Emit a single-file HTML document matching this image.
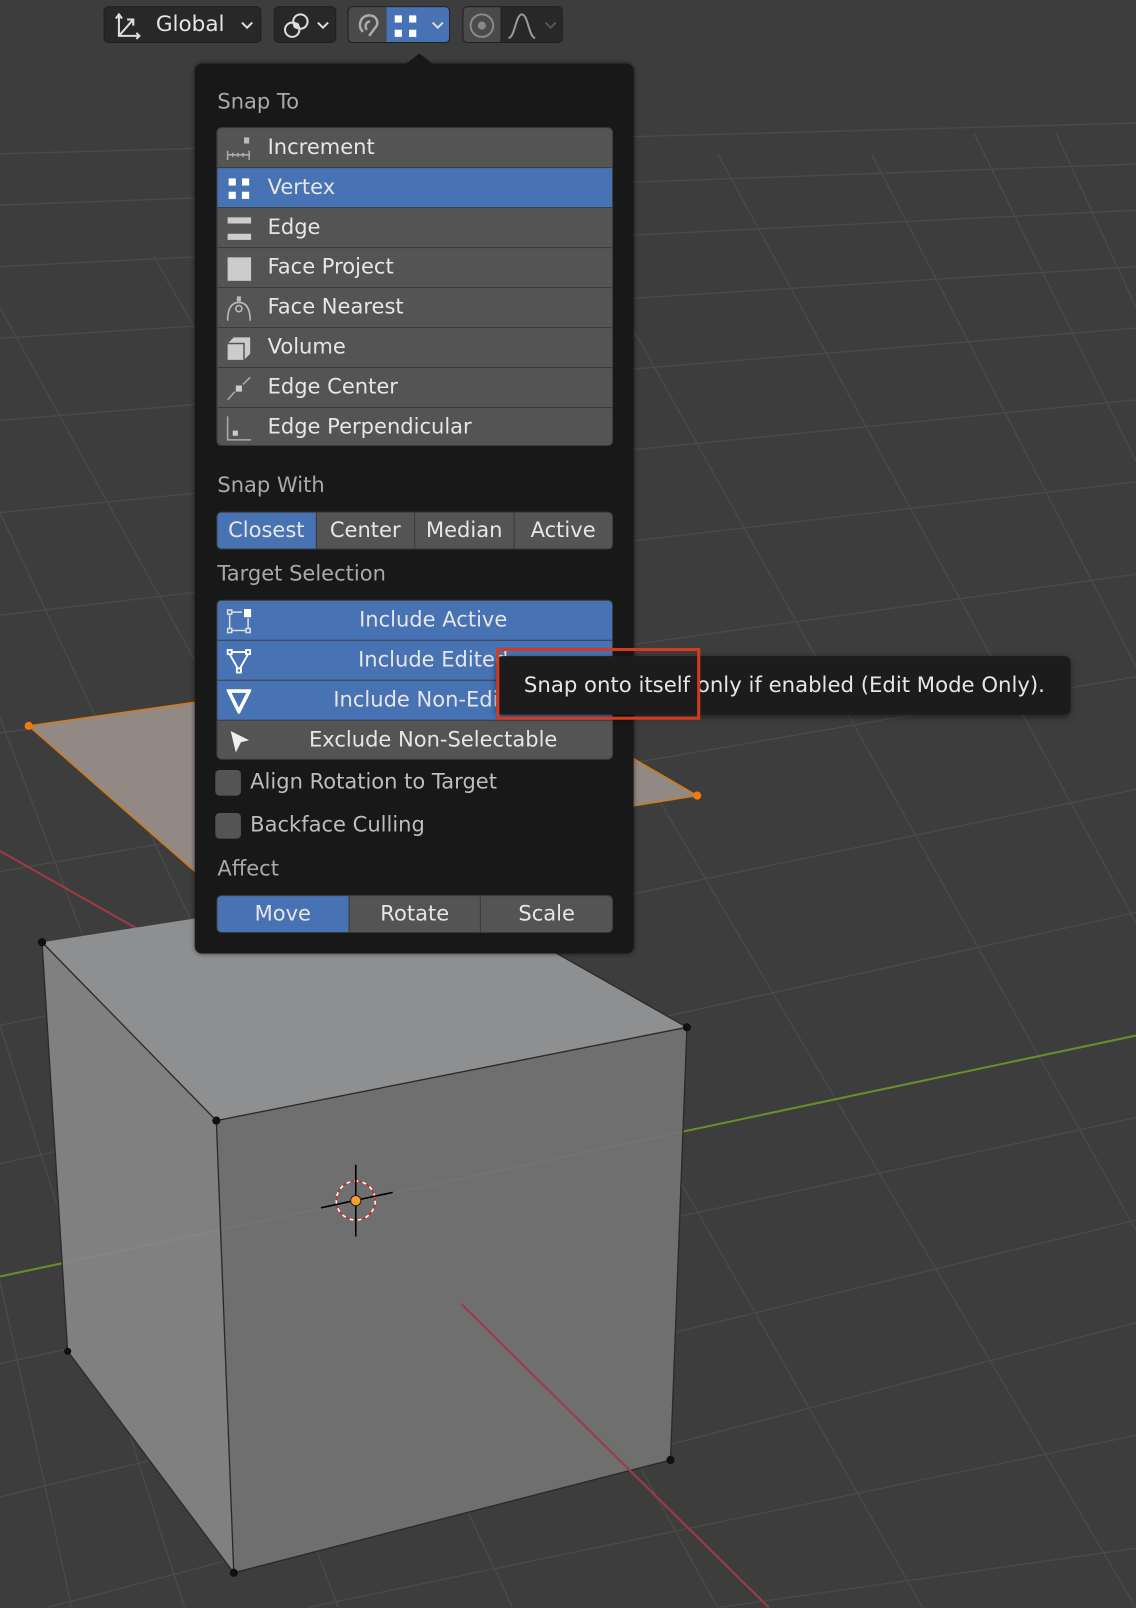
<!DOCTYPE html>
<html><head><meta charset="utf-8"><style>
html,body{margin:0;padding:0;background:#3d3d3d;overflow:hidden;width:1136px;height:1608px}
#w{position:absolute;left:0;top:0;width:1108px;height:1568px;transform:scale(1.02527);transform-origin:0 0;font-family:"DejaVu Sans","Liberation Sans",sans-serif;}
.abs{position:absolute}
.pop{left:190px;top:62px;width:428px;height:868px;background:#181818;border-radius:7px;box-shadow:0 0 4px rgba(0,0,0,.5)}
.lbl{position:absolute;left:22px;color:#a9a9a9;font-size:20.5px}
.list{position:absolute;left:21px;width:387px;background:#545454;border-radius:5px;overflow:hidden;border:1px solid #3a3a3a;box-sizing:border-box}
.row{height:39px;border-bottom:1px solid #3a3a3a;box-sizing:border-box;color:#e6e6e6;font-size:20.5px;line-height:37px;position:relative;padding-left:49px}
.row:last-child{border-bottom:none}
.sel{background:#4772b3}
.ic{position:absolute;left:9px;top:8px;width:24px;height:24px}
.c{padding-left:36px;text-align:center}
.seg{position:absolute;left:21px;width:387px;height:37px;display:flex;border-radius:5px;overflow:hidden;background:#545454;border:1px solid #3a3a3a;box-sizing:border-box}
.seg div{flex:1;text-align:center;color:#e6e6e6;font-size:20.5px;line-height:35px;border-left:1px solid #3a3a3a}
.seg div:first-child{border-left:none}
.cb{position:absolute;left:20px;width:25px;height:25px;background:#545454;border-radius:4px}
.cbt{position:absolute;left:54px;color:#bdbdbd;font-size:20.5px}
.tb{position:absolute;top:6px;height:36px;background:#282828;border-radius:5px;border:1px solid #202020;box-sizing:border-box}
</style></head><body><div id="w">
<svg class="abs" style="left:0;top:0" width="1108" height="1568">
<rect width="1108" height="1568" fill="#3d3d3d"/>
<g stroke="#4a4a4a" stroke-width="1.3" fill="none">
<line x1="0" y1="150" x2="1108" y2="120"/>
<line x1="0" y1="200" x2="1108" y2="160"/>
<line x1="0" y1="260" x2="1108" y2="205"/>
<line x1="0" y1="330" x2="1108" y2="260"/>
<line x1="0" y1="410" x2="1108" y2="320"/>
<line x1="0" y1="500" x2="1108" y2="390"/>
<line x1="0" y1="600" x2="1108" y2="470"/>
<line x1="0" y1="715" x2="1108" y2="560"/>
<line x1="0" y1="850" x2="1108" y2="660"/>
<line x1="0" y1="1000" x2="1108" y2="770"/>
<line x1="0" y1="1135" x2="1108" y2="890"/>
<line x1="0" y1="1330" x2="1108" y2="1090"/>
<line x1="0" y1="1460" x2="1108" y2="1190"/>
<line x1="0" y1="1580" x2="1108" y2="1290"/>
<line x1="300" y1="1568" x2="1108" y2="1400"/>
<line x1="700" y1="1568" x2="1108" y2="1510"/>
<line x1="0" y1="300" x2="700" y2="1568"/>
<line x1="0" y1="500" x2="500" y2="1568"/>
<line x1="0" y1="700" x2="330" y2="1568"/>
<line x1="0" y1="1000" x2="180" y2="1568"/>
<line x1="0" y1="1250" x2="70" y2="1568"/>
<line x1="150" y1="250" x2="900" y2="1568"/>
<line x1="300" y1="200" x2="1108" y2="1568"/>
<line x1="550" y1="200" x2="1108" y2="1200"/>
<line x1="700" y1="150" x2="1108" y2="900"/>
<line x1="850" y1="150" x2="1108" y2="650"/>
<line x1="950" y1="130" x2="1108" y2="450"/>
<line x1="1030" y1="130" x2="1108" y2="300"/>
</g>
<line x1="0" y1="830" x2="300" y2="1000" stroke="#a03a46" stroke-width="2"/>
<line x1="0" y1="1245" x2="1108" y2="1010" stroke="#6a8e2a" stroke-width="2"/>
<polygon points="28,708 190,685 618,740 680,776 618,786 190,850" fill="#928884" stroke="#d17a1a" stroke-width="1.5"/>
<circle cx="28" cy="708" r="4" fill="#f07a10"/><circle cx="680" cy="776" r="4" fill="#f07a10"/>
<polygon points="41,919 420,860 670,1002 211,1093" fill="#8e8f91"/>
<polygon points="41,919 211,1093 228,1534 66,1318" fill="#858585" opacity="0.93"/>
<polygon points="211,1093 670,1002 654,1424 228,1534" fill="#727372" opacity="0.93"/>
<g stroke="#2a2a2a" stroke-width="1.3" fill="none">
<polyline points="41,919 211,1093 670,1002"/><polyline points="41,919 66,1318 228,1534 654,1424 670,1002"/><line x1="211" y1="1093" x2="228" y2="1534"/>
<polyline points="420,860 670,1002"/>
</g>
<line x1="450" y1="1272" x2="750" y2="1568" stroke="#a03a46" stroke-width="2"/>
<g fill="#111"><circle cx="41" cy="919" r="4"/><circle cx="211" cy="1093" r="4"/><circle cx="670" cy="1002" r="4"/><circle cx="66" cy="1318" r="3.5"/><circle cx="228" cy="1534" r="4"/><circle cx="654" cy="1424" r="4"/></g>
<circle cx="347" cy="1171" r="19" fill="none" stroke="#fff" stroke-dasharray="4 4" stroke-width="1.5"/>
<circle cx="347" cy="1171" r="19" fill="none" stroke="#d22" stroke-dasharray="4 4" stroke-dashoffset="4" stroke-width="1.5"/>
<g stroke="#000" stroke-width="1.6"><line x1="347" y1="1136" x2="347" y2="1206"/><line x1="313" y1="1178" x2="383" y2="1163"/></g>
<circle cx="347" cy="1171" r="5" fill="#f2a030" stroke="#222"/>
</svg>
<!-- toolbar -->
<div class="tb" style="left:101px;width:154px">
<svg class="abs" style="left:8px;top:4px" width="30" height="28" fill="none" stroke="#ddd" stroke-width="2"><path d="M6 4v20h20M6 24L20 8M3 7l3-4 3 4M23 21l3 3-3 3"/><path d="M14 8h6v6"/></svg>
<span class="abs" style="left:50px;top:4px;color:#e6e6e6;font-size:21px">Global</span>
<svg class="abs" style="left:132px;top:13px" width="14" height="10"><path d="M2 2l5 5 5-5" stroke="#ddd" stroke-width="2" fill="none"/></svg></div>
<div class="tb" style="left:267px;width:61px">
<svg class="abs" style="left:6px;top:4px" width="30" height="28" fill="none" stroke="#ddd" stroke-width="2"><circle cx="11" cy="18" r="7"/><circle cx="19" cy="10" r="7"/><circle cx="15" cy="14" r="2" fill="#ddd"/></svg>
<svg class="abs" style="left:40px;top:13px" width="14" height="10"><path d="M2 2l5 5 5-5" stroke="#ddd" stroke-width="2" fill="none"/></svg></div>
<div class="tb" style="left:339px;width:100px;overflow:hidden;background:#4a4a4a">
<svg class="abs" style="left:5px;top:4px" width="30" height="28" fill="none" stroke="#aaa" stroke-width="2.5"><path d="M9 20c-6-6-2-16 6-16s10 8 6 12l-6 8"/><path d="M13 18c-3-3-1-8 3-8"/></svg>
<div class="abs" style="left:37px;top:0;width:63px;height:36px;background:#4772b3"></div>
<svg class="abs" style="left:44px;top:7px" width="26" height="24" fill="#fff"><rect x="1" y="1" width="7" height="7"/><rect x="15" y="1" width="7" height="7"/><rect x="1" y="15" width="7" height="7"/><rect x="15" y="15" width="7" height="7"/></svg>
<svg class="abs" style="left:80px;top:13px" width="14" height="10"><path d="M2 2l5 5 5-5" stroke="#ddd" stroke-width="2" fill="none"/></svg></div>
<div class="tb" style="left:451px;width:98px;overflow:hidden">
<div class="abs" style="left:0;top:0;width:36px;height:36px;background:#4a4a4a"></div>
<svg class="abs" style="left:4px;top:4px" width="28" height="28"><circle cx="14" cy="14" r="11" fill="none" stroke="#888" stroke-width="2"/><circle cx="14" cy="14" r="4" fill="#888"/></svg>
<svg class="abs" style="left:42px;top:4px" width="30" height="28"><path d="M2 26C8 26 9 3 15 3S22 26 28 26" fill="none" stroke="#999" stroke-width="2"/></svg>
<svg class="abs" style="left:78px;top:13px" width="14" height="10"><path d="M2 2l5 5 5-5" stroke="#555" stroke-width="2" fill="none"/></svg></div>
<!-- popup -->
<div class="abs pop">
<div class="abs" style="left:205px;top:-10px;width:0;height:0;border-left:14px solid transparent;border-right:14px solid transparent;border-bottom:11px solid #181818"></div>
<div class="lbl" style="top:25px">Snap To</div>
<div class="list" style="top:62px;height:311px">
<div class="row"><svg class="ic" viewBox="0 0 24 24" fill="none" stroke="#aaa" stroke-width="1.5"><path d="M1 14v9M1 18h22M6 16v4M11 16v4M16 16v4M22 14v9"/><rect x="17" y="1" width="5" height="6" fill="#bbb" stroke="none"/></svg>Increment</div>
<div class="row sel"><svg class="ic" viewBox="0 0 24 24" fill="#fff"><rect x="2" y="2" width="7" height="7"/><rect x="15" y="2" width="7" height="7"/><rect x="2" y="15" width="7" height="7"/><rect x="15" y="15" width="7" height="7"/></svg>Vertex</div>
<div class="row"><svg class="ic" viewBox="0 0 24 24" fill="#ccc"><rect x="1" y="1" width="23" height="6"/><rect x="1" y="17" width="23" height="6"/></svg>Edge</div>
<div class="row"><svg class="ic" viewBox="0 0 24 24" fill="#ccc"><rect x="1" y="1" width="23" height="23"/></svg>Face Project</div>
<div class="row"><svg class="ic" viewBox="0 0 24 24" fill="none" stroke="#bbb" stroke-width="1.5"><path d="M1 24C1 10 6 6 12 6s11 4 11 18"/><circle cx="12" cy="12" r="3"/><rect x="10" y="0" width="4" height="5" fill="#bbb" stroke="none"/></svg>Face Nearest</div>
<div class="row"><svg class="ic" viewBox="0 0 24 24" fill="#ccc"><path d="M1 7l6-6h16v16l-6 6H1z"/><path d="M1 7h16v16" stroke="#555" stroke-width="1.5" fill="none"/></svg>Volume</div>
<div class="row"><svg class="ic" viewBox="0 0 24 24" fill="none" stroke="#aaa" stroke-width="1.5"><path d="M1 23L8 15M16 8l7-7"/><rect x="9" y="9" width="6" height="6" fill="#ccc" stroke="none"/></svg>Edge Center</div>
<div class="row"><svg class="ic" viewBox="0 0 24 24" fill="none" stroke="#aaa" stroke-width="1.5"><path d="M1 0v23h23"/><rect x="6" y="14" width="5" height="5" fill="#ccc" stroke="none"/></svg>Edge Perpendicular</div>
</div>
<div class="lbl" style="top:399px">Snap With</div>
<div class="seg" style="top:437px"><div class="sel" style="background:#4772b3">Closest</div><div>Center</div><div>Median</div><div>Active</div></div>
<div class="lbl" style="top:485px">Target Selection</div>
<div class="list" style="top:523px;height:156px">
<div class="row sel c"><svg class="ic" viewBox="0 0 24 24" fill="none" stroke="#ddd" stroke-width="1.5"><rect x="1" y="1" width="4" height="4"/><rect x="1" y="19" width="4" height="4"/><rect x="19" y="19" width="4" height="4"/><path d="M3 5v14M5 21h14M21 19V9M5 3h10"/><rect x="17" y="0" width="7" height="8" fill="#fff" stroke="none"/></svg>Include Active</div>
<div class="row sel c"><svg class="ic" viewBox="0 0 24 24" fill="none" stroke="#fff" stroke-width="1.8"><rect x="1" y="1" width="4" height="4"/><rect x="19" y="1" width="4" height="4"/><rect x="10" y="19" width="4" height="4"/><path d="M5 3h14M3 5l8 14M21 5l-8 14"/></svg>Include Edited</div>
<div class="row sel c"><svg class="ic" viewBox="0 0 24 24" fill="none" stroke="#fff" stroke-width="3.5"><path d="M2 2h20L12 22z"/></svg>Include Non-Edited</div>
<div class="row c"><svg class="ic" viewBox="0 0 24 24" fill="#eee"><path d="M4 2l18 9-8 2-5 10z"/></svg>Exclude Non-Selectable</div>
</div>
<div class="cb" style="top:689px"></div><div class="cbt" style="top:688px">Align Rotation to Target</div>
<div class="cb" style="top:731px"></div><div class="cbt" style="top:730px">Backface Culling</div>
<div class="lbl" style="top:773px">Affect</div>
<div class="seg" style="top:811px"><div style="background:#4772b3">Move</div><div>Rotate</div><div>Scale</div></div>
</div>
<!-- tooltip -->
<div class="abs" style="left:484px;top:640px;width:560px;height:57px;background:#1c1c1c;border-radius:6px;box-shadow:0 2px 6px rgba(0,0,0,.5)"></div>
<div class="abs" style="left:511px;top:656px;color:#e6e6e6;font-size:20.7px;white-space:nowrap">Snap onto itself only if enabled (Edit Mode Only).</div>
<div class="abs" style="left:484px;top:632px;width:199px;height:70px;border:3px solid #d23a22;box-sizing:border-box"></div>
</div></body></html>
